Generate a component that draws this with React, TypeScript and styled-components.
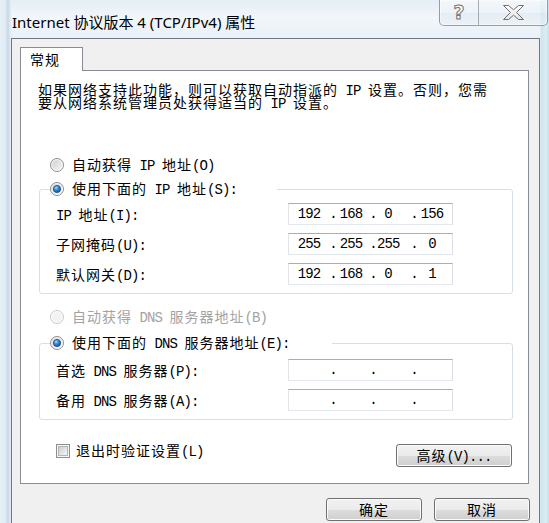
import React from "react";
import styled, { createGlobalStyle } from "styled-components";

const CJK = `"Noto Sans CJK SC", "Noto Sans CJK JP", sans-serif`;

const GlobalStyle = createGlobalStyle`
  html, body { margin: 0; padding: 0; background: #e3edf5; }
  #root { width: 549px; height: 523px; }
`;

const Screen = styled.div`
  width: 549px;
  height: 523px;
  overflow: hidden;
  display: flex;
  flex-direction: column;
  background:
    linear-gradient(90deg, #e6f0f6 0px, #e2edf5 5px, #c8d7e6 8px, #dde9f2 10px, rgba(255,255,255,0) 12px),
    linear-gradient(90deg, rgba(0,0,0,0) 540px, #cfe4ee 541px, #dbeef4 546px, #c8dee9 549px),
    linear-gradient(180deg, #e6eef6 0px, #f1f6fa 18px, #e9f1f7 38px, #e0ebf3 100%);
  font-family: ${CJK};
  color: #000;
`;

const Defs = styled.svg`
  display: block;
  flex: none;
  width: 0;
  height: 0;
`;

const TitleBar = styled.div`
  flex: none;
  height: 38px;
  display: flex;
  align-items: flex-start;
`;

const TitleText = styled.div`
  margin: 11px 0 0 12px;
  font-family: "Noto Sans", ${CJK};
  font-size: 15px;
  line-height: 22px;
  white-space: nowrap;
`;

const CaptionGroup = styled.div`
  margin-left: auto;
  margin-right: 1px;
  height: 26px;
  box-sizing: border-box;
  display: flex;
  border: 1px solid rgba(74, 86, 104, 0.55);
  border-top: none;
  border-radius: 0 0 5px 5px;
  background: linear-gradient(180deg, rgba(255,255,255,0.55), rgba(236,242,248,0.5) 50%, rgba(220,231,240,0.55) 51%, rgba(230,238,245,0.6));
  box-shadow: inset 0 0 0 1px rgba(255,255,255,0.45);
  overflow: hidden;
`;

const CaptionButton = styled.div<{ $w: number }>`
  box-sizing: border-box;
  width: ${p => p.$w}px;
  display: flex;
  align-items: center;
  justify-content: center;
  & + & { border-left: 1px solid rgba(74, 86, 104, 0.45); }
`;

const HelpGlyph = styled.span`
  font-family: "DejaVu Sans", sans-serif;
  font-weight: bold;
  font-size: 19px;
  line-height: 1;
  color: #fbfbfb;
  -webkit-text-stroke: 1px #747474;
`;

const Body = styled.div`
  flex: 1;
  margin: 0 9px 0 11px;
  background: #f0f0f0;
  border: 1px solid #6d7885;
  border-bottom: none;
  padding: 8px 10px 0 8px;
  display: flex;
  flex-direction: column;
`;

const TabStrip = styled.div`
  display: flex;
  height: 23px;
`;

const Tab = styled.div`
  position: relative;
  z-index: 1;
  box-sizing: border-box;
  width: 63px;
  height: 24px;
  background: #fff;
  border: 1px solid #898c95;
  border-bottom: none;
  padding-left: 9px;
  font-size: 14px;
  letter-spacing: 1px;
  line-height: 23px;
`;

const Panel = styled.div`
  box-sizing: border-box;
  height: 414px;
  background: #fff;
  border: 1px solid #898c95;
  padding: 0 15px 0 17px;
  display: flex;
  flex-direction: column;
`;

const Intro = styled.p`
  margin: 12px 0 0 0;
  height: 26px;
  font-size: 14px;
  letter-spacing: 1px;
  line-height: 13px;
  white-space: nowrap;
`;

const IntroLine = styled.span`
  display: block;
  height: 13px;
`;

const Latin = styled.span`
  font-family: "Liberation Mono", monospace;
  font-size: 14px;
  letter-spacing: -0.9px;
`;

const OptionRow = styled.div<{ $disabled?: boolean; $top?: number }>`
  display: flex;
  align-items: center;
  gap: 8px;
  height: 18px;
  margin-top: ${p => p.$top ?? 0}px;
  padding-left: 12px;
  font-size: 14px;
  letter-spacing: 1px;
  line-height: 18px;
  white-space: nowrap;
  color: ${p => (p.$disabled ? "#a3a3a3" : "#000")};
  & > svg { flex: none; }
`;

const GroupBox = styled.fieldset<{ $top: number }>`
  margin: ${p => p.$top}px 0 0 1px;
  padding: 0;
  min-width: 0;
  border: 1px solid #d5dfe5;
  border-radius: 3px;
`;

const GroupLegend = styled.legend<{ $w: number }>`
  box-sizing: border-box;
  width: ${p => p.$w}px;
  margin-left: 10px;
  padding: 0;
  display: flex;
  align-items: center;
  gap: 8px;
  height: 18px;
  font-size: 14px;
  letter-spacing: 1px;
  line-height: 18px;
  white-space: nowrap;
  & > svg { flex: none; }
`;

const FieldGrid = styled.div<{ $pt: number }>`
  display: grid;
  grid-template-columns: 232px 165px;
  grid-auto-rows: 22px;
  row-gap: 8px;
  padding: ${p => p.$pt}px 0 8px 16px;
`;

const FieldLabel = styled.div`
  font-size: 14px;
  letter-spacing: 1px;
  line-height: 22px;
  height: 22px;
  white-space: nowrap;
`;

const IpBox = styled.div`
  box-sizing: border-box;
  width: 165px;
  height: 22px;
  display: flex;
  align-items: center;
  background: #fff;
  border: 1px solid;
  border-color: #abadb3 #dbdfe6 #e3e9ef #e2e3ea;
  font-family: "Liberation Mono", monospace;
  font-size: 14px;
  letter-spacing: -0.9px;
  line-height: 20px;
`;

const Octet = styled.span<{ $w: number; $pr: number }>`
  box-sizing: border-box;
  width: ${p => p.$w}px;
  padding-right: ${p => p.$pr}px;
  text-align: center;
  white-space: nowrap;
`;

const Dot = styled.span`
  width: 8px;
  text-align: center;
`;

const BottomRow = styled.div`
  display: flex;
  align-items: flex-start;
  margin-top: 22px;
`;

const CheckRow = styled.div`
  display: flex;
  align-items: center;
  gap: 6px;
  height: 18px;
  margin-left: 18px;
  font-size: 14px;
  letter-spacing: 1px;
  line-height: 18px;
  white-space: nowrap;
  & > svg { flex: none; }
`;

const Button = styled.button<{ $w: number }>`
  box-sizing: border-box;
  width: ${p => p.$w}px;
  height: 23px;
  padding: 0;
  border: 1px solid #707070;
  border-radius: 3px;
  background: linear-gradient(180deg, #f2f2f2 0%, #ebebeb 50%, #dddddd 51%, #cfcfcf 100%);
  box-shadow: inset 0 0 0 1px #fbfbfb;
  font-family: ${CJK};
  font-size: 14px;
  letter-spacing: 1px;
  line-height: 21px;
  color: #000;
`;

const AdvancedButton = styled(Button)`
  margin: 2px 1px 0 auto;
`;

const Footer = styled.div`
  display: flex;
  justify-content: flex-end;
  gap: 12px;
  margin: 14px -1px 0 0;
`;

function T({ children }: { children: string }) {
  const parts = children.split(/([\x20-\x7E]+)/);
  return (
    <>
      {parts.map((s, i) => (i % 2 ? <Latin key={i}>{s}</Latin> : <React.Fragment key={i}>{s}</React.Fragment>))}
    </>
  );
}

function Radio({ checked = false, disabled = false }: { checked?: boolean; disabled?: boolean }) {
  return (
    <svg width="14" height="14" viewBox="0 0 14 14">
      <circle cx="7" cy="7" r="6.5" fill={disabled ? "#f3f3f3" : "url(#radioFace)"} stroke={disabled ? "#c8c8c8" : "#8b8d8e"} />
      <circle cx="7" cy="7" r="5.4" fill="none" stroke={disabled ? "#fbfbfb" : "rgba(255,255,255,0.7)"} strokeWidth="1" />
      {checked && <circle cx="7" cy="7" r="3.6" fill="url(#radioDot)" stroke="#1a4a82" strokeWidth="0.8" />}
    </svg>
  );
}

function CheckBox() {
  return (
    <svg width="14" height="14" viewBox="0 0 14 14">
      <rect x="0.5" y="0.5" width="13" height="13" fill="#f5f5f5" stroke="#8e8f8f" />
      <rect x="2.5" y="2.5" width="9" height="9" fill="url(#checkFace)" stroke="#b2b6bb" />
    </svg>
  );
}

function CloseIcon() {
  return (
    <svg width="23" height="15" viewBox="0 0 23 15">
      <polygon
        points="1.5,0.5 6.5,0.5 11.5,4.8 16.5,0.5 21.5,0.5 14.5,7.5 21.5,14.5 16.5,14.5 11.5,10.2 6.5,14.5 1.5,14.5 8.5,7.5"
        fill="url(#closeFace)"
        stroke="#6f6f6f"
        strokeWidth="1"
        strokeLinejoin="round"
      />
    </svg>
  );
}

const OCTETS = [
  { w: 40, pr: 0 },
  { w: 32, pr: 4 },
  { w: 33, pr: 11 },
  { w: 34, pr: 6 },
];

function IpField({ value }: { value: string[] }) {
  return (
    <IpBox>
      {OCTETS.map((o, i) => (
        <React.Fragment key={i}>
          {i > 0 && <Dot>.</Dot>}
          <Octet $w={o.w} $pr={o.pr}>{value[i]}</Octet>
        </React.Fragment>
      ))}
    </IpBox>
  );
}

const EMPTY = ["", "", "", ""];

export default function App() {
  return (
    <>
      <GlobalStyle />
      <Screen>
        <Defs width="0" height="0">
          <defs>
            <linearGradient id="radioFace" x1="0" y1="0" x2="1" y2="1">
              <stop offset="0" stopColor="#c9cbcd" />
              <stop offset="1" stopColor="#fafafa" />
            </linearGradient>
            <radialGradient id="radioDot" cx="0.38" cy="0.32" r="0.7">
              <stop offset="0" stopColor="#a9dcff" />
              <stop offset="0.45" stopColor="#3a8ad6" />
              <stop offset="1" stopColor="#17559c" />
            </radialGradient>
            <linearGradient id="checkFace" x1="0" y1="0" x2="1" y2="1">
              <stop offset="0" stopColor="#c8ccd2" />
              <stop offset="1" stopColor="#f8f8f9" />
            </linearGradient>
            <linearGradient id="closeFace" x1="0" y1="0" x2="0" y2="1">
              <stop offset="0" stopColor="#ffffff" />
              <stop offset="1" stopColor="#e4e4e4" />
            </linearGradient>
          </defs>
        </Defs>
        <TitleBar>
          <TitleText>Internet 协议版本 4 (TCP/IPv4) 属性</TitleText>
          <CaptionGroup>
            <CaptionButton $w={38}>
              <HelpGlyph>?</HelpGlyph>
            </CaptionButton>
            <CaptionButton $w={69}>
              <CloseIcon />
            </CaptionButton>
          </CaptionGroup>
        </TitleBar>
        <Body>
          <TabStrip>
            <Tab>常规</Tab>
          </TabStrip>
          <Panel>
            <Intro>
              <IntroLine><T>如果网络支持此功能，则可以获取自动指派的 IP 设置。否则，您需</T></IntroLine>
              <IntroLine><T>要从网络系统管理员处获得适当的 IP 设置。</T></IntroLine>
            </Intro>

            <OptionRow $top={47}>
              <Radio />
              <span><T>自动获得 IP 地址(O)</T></span>
            </OptionRow>

            <GroupBox $top={6}>
              <GroupLegend $w={227}>
                <Radio checked />
                <span><T>使用下面的 IP 地址(S):</T></span>
              </GroupLegend>
              <FieldGrid $pt={5}>
                <FieldLabel><T>IP 地址(I):</T></FieldLabel>
                <IpField value={["192", "168", "0", "156"]} />
                <FieldLabel><T>子网掩码(U):</T></FieldLabel>
                <IpField value={["255", "255", "255", "0"]} />
                <FieldLabel><T>默认网关(D):</T></FieldLabel>
                <IpField value={["192", "168", "0", "1"]} />
              </FieldGrid>
            </GroupBox>

            <OptionRow $top={14} $disabled>
              <Radio disabled />
              <span><T>自动获得 DNS 服务器地址(B)</T></span>
            </OptionRow>

            <GroupBox $top={8}>
              <GroupLegend $w={282}>
                <Radio checked />
                <span><T>使用下面的 DNS 服务器地址(E):</T></span>
              </GroupLegend>
              <FieldGrid $pt={7}>
                <FieldLabel><T>首选 DNS 服务器(P):</T></FieldLabel>
                <IpField value={EMPTY} />
                <FieldLabel><T>备用 DNS 服务器(A):</T></FieldLabel>
                <IpField value={EMPTY} />
              </FieldGrid>
            </GroupBox>

            <BottomRow>
              <CheckRow>
                <CheckBox />
                <span><T>退出时验证设置(L)</T></span>
              </CheckRow>
              <AdvancedButton $w={116}>
                <T>高级(V)...</T>
              </AdvancedButton>
            </BottomRow>
          </Panel>
          <Footer>
            <Button $w={96}>确定</Button>
            <Button $w={96}>取消</Button>
          </Footer>
        </Body>
      </Screen>
    </>
  );
}
